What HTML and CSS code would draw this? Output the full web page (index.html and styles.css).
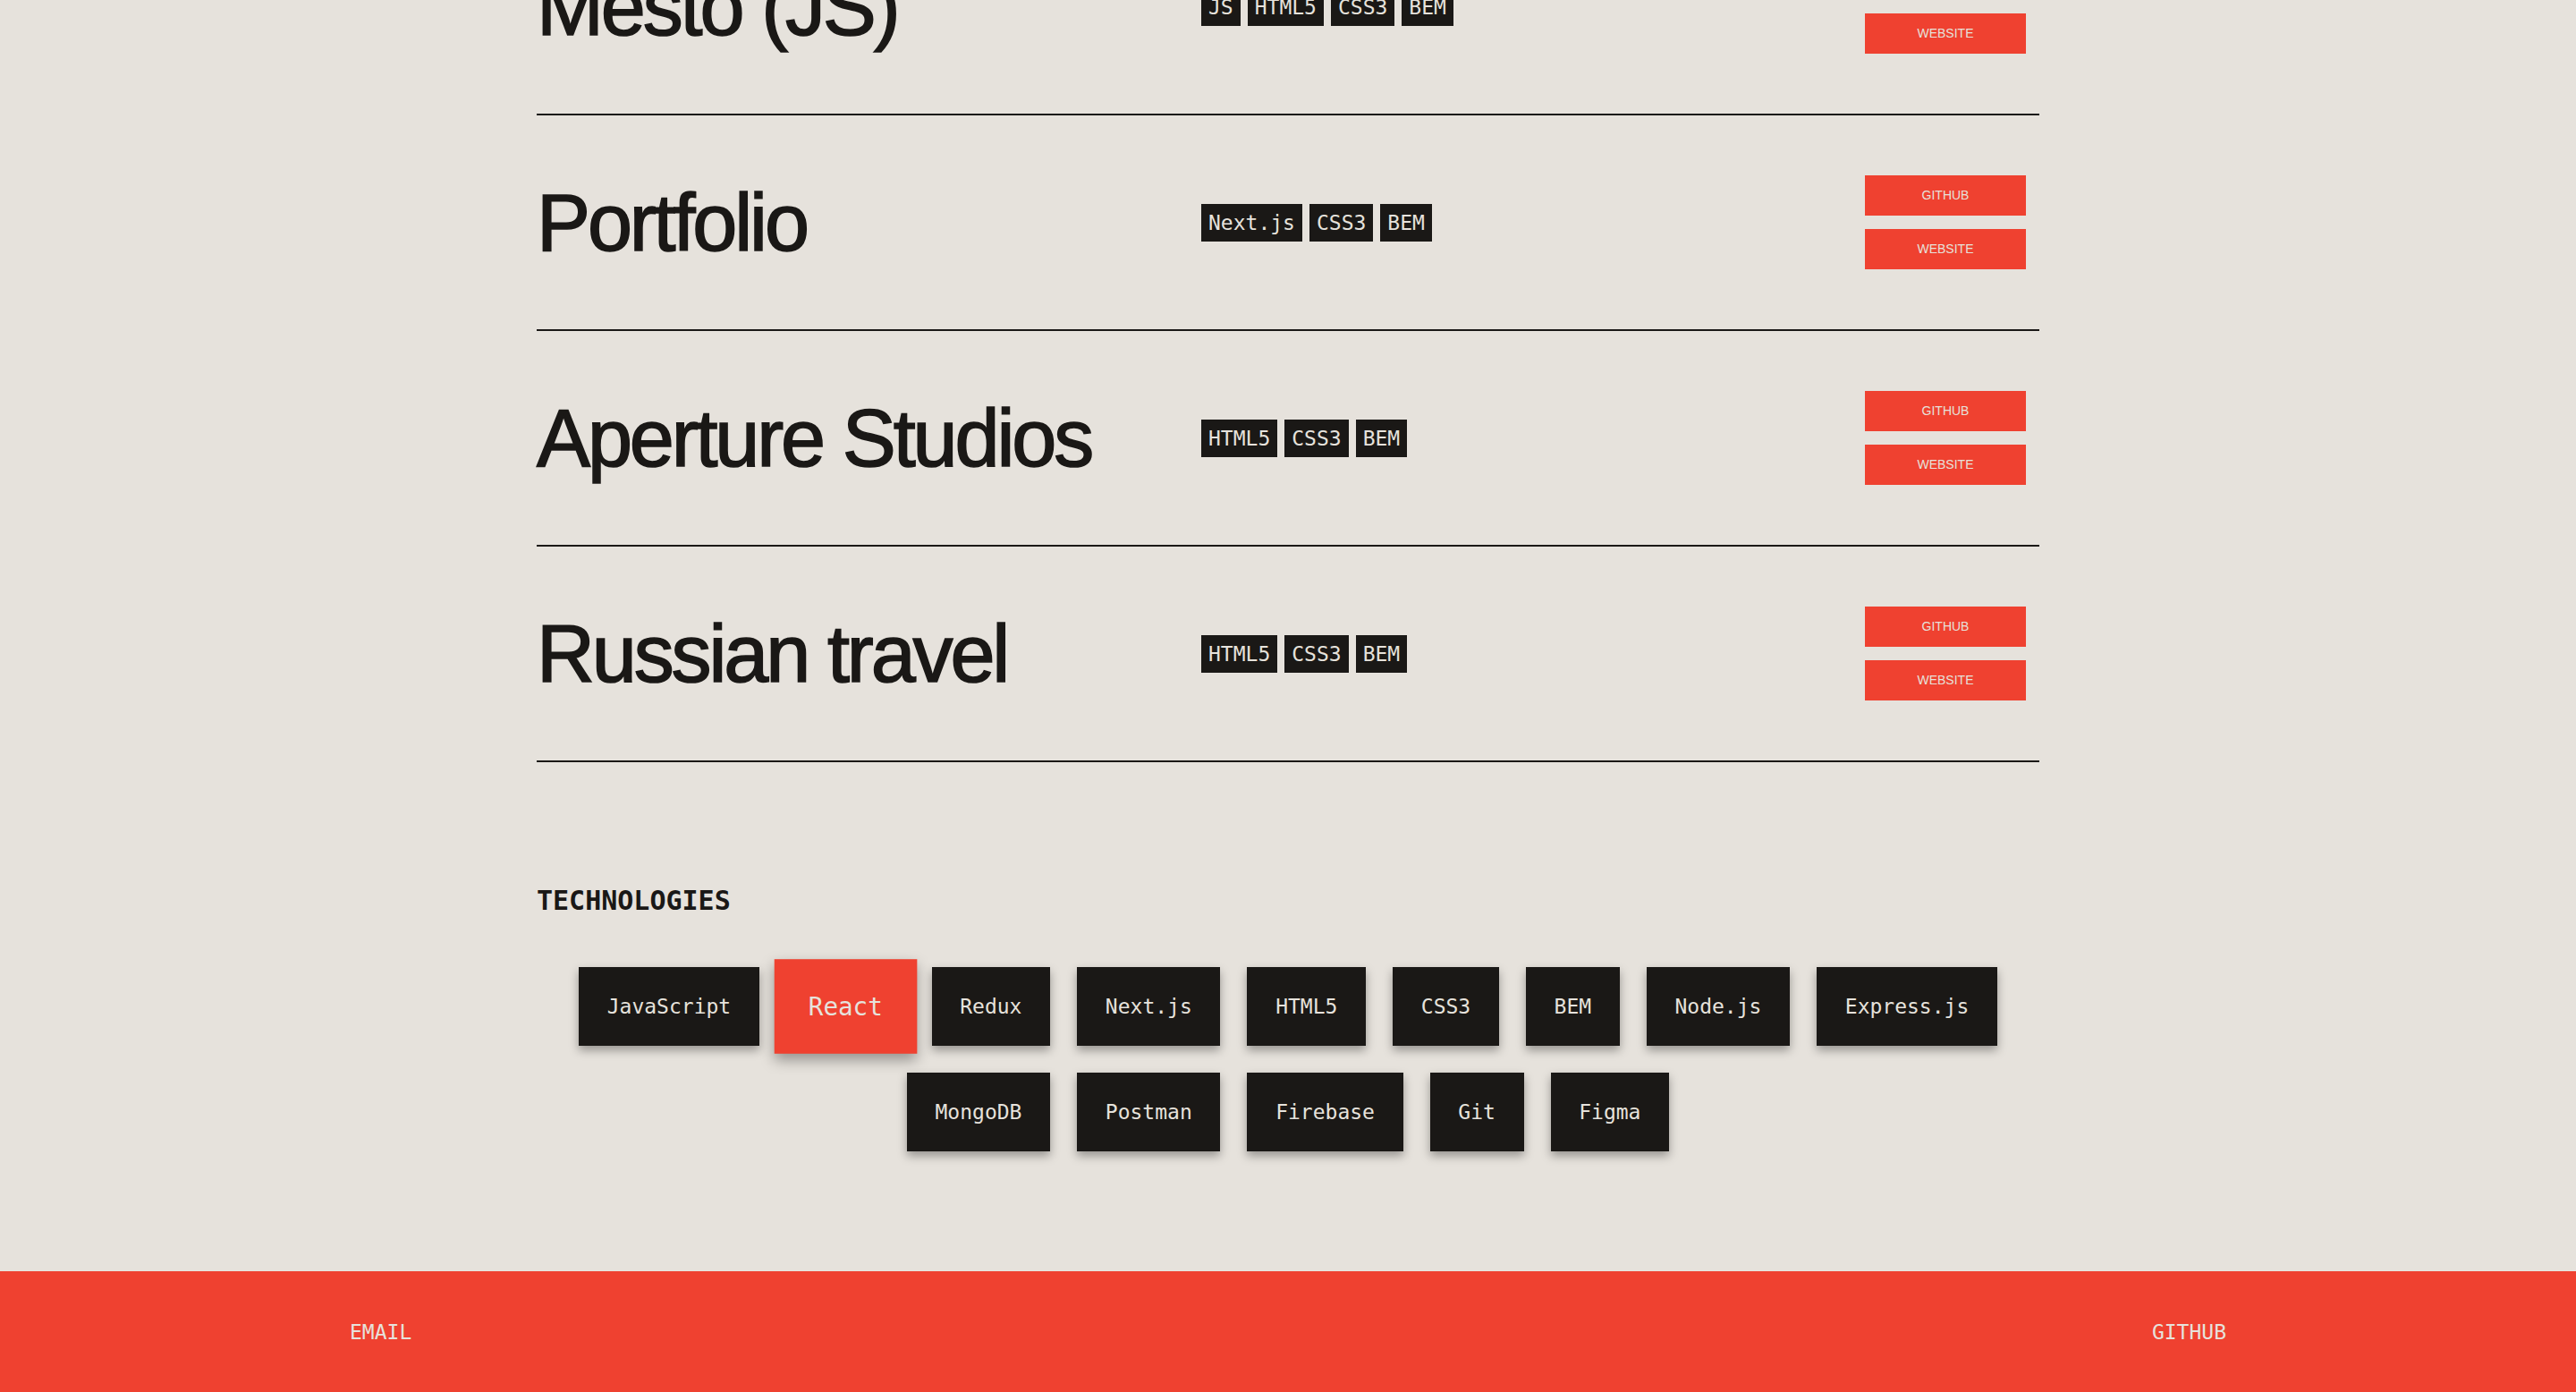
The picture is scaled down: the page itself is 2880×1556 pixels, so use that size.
FILE: index.html
```html
<!DOCTYPE html>
<html lang="en">
<head>
<meta charset="utf-8">
<title>Projects</title>
<link rel="stylesheet" href="styles.css">
</head>
<body>
<main class="page">
  <section class="projects">
    <ul class="project-list">
      <li class="project">
        <h3 class="project__title">Mesto (JS)</h3>
        <ul class="project__tags">
          <li class="tag">JS</li><li class="tag">HTML5</li><li class="tag">CSS3</li><li class="tag">BEM</li>
        </ul>
        <div class="project__links">
          <a class="btn" href="#">GitHub</a>
          <a class="btn" href="#">Website</a>
        </div>
      </li>
      <li class="project">
        <h3 class="project__title">Portfolio</h3>
        <ul class="project__tags">
          <li class="tag">Next.js</li><li class="tag">CSS3</li><li class="tag">BEM</li>
        </ul>
        <div class="project__links">
          <a class="btn" href="#">GitHub</a>
          <a class="btn" href="#">Website</a>
        </div>
      </li>
      <li class="project">
        <h3 class="project__title">Aperture Studios</h3>
        <ul class="project__tags">
          <li class="tag">HTML5</li><li class="tag">CSS3</li><li class="tag">BEM</li>
        </ul>
        <div class="project__links">
          <a class="btn" href="#">GitHub</a>
          <a class="btn" href="#">Website</a>
        </div>
      </li>
      <li class="project">
        <h3 class="project__title">Russian travel</h3>
        <ul class="project__tags">
          <li class="tag">HTML5</li><li class="tag">CSS3</li><li class="tag">BEM</li>
        </ul>
        <div class="project__links">
          <a class="btn" href="#">GitHub</a>
          <a class="btn" href="#">Website</a>
        </div>
      </li>
    </ul>
  </section>

  <section class="tech">
    <h2 class="tech__title">TECHNOLOGIES</h2>
    <ul class="tech__list">
      <li class="chip">JavaScript</li>
      <li class="chip chip--active">React</li>
      <li class="chip">Redux</li>
      <li class="chip">Next.js</li>
      <li class="chip">HTML5</li>
      <li class="chip">CSS3</li>
      <li class="chip">BEM</li>
      <li class="chip">Node.js</li>
      <li class="chip">Express.js</li>
      <li class="chip">MongoDB</li>
      <li class="chip">Postman</li>
      <li class="chip">Firebase</li>
      <li class="chip">Git</li>
      <li class="chip">Figma</li>
    </ul>
  </section>
</main>

<footer class="footer">
  <div class="footer__inner">
    <a class="footer__link" href="#">EMAIL</a>
    <a class="footer__link" href="#">GITHUB</a>
  </div>
</footer>
</body>
</html>
```

FILE: styles.css
```css
* {
  box-sizing: border-box;
}

html, body {
  margin: 0;
  padding: 0;
}

body {
  background: #e6e2dc;
  color: #1a1816;
  font-family: "Liberation Sans", Arial, sans-serif;
  overflow: hidden;
}

.page {
  width: 1680px;
  margin: 0 auto;
}

/* ---------- projects ---------- */
.projects {
  margin-top: -112px;
}

.project-list {
  list-style: none;
  margin: 0;
  padding: 0;
}

.project {
  display: grid;
  grid-template-columns: 743px 1fr 180px;
  align-items: center;
  padding: 67px 15px 67px 0;
  border-bottom: 2px solid #1a1816;
}

.project__title {
  margin: 0;
  font-family: "Liberation Sans", Arial, sans-serif;
  font-weight: 400;
  font-size: 90px;
  line-height: 1;
  letter-spacing: -0.035em;
  -webkit-text-stroke: 1.6px #1a1816;
  white-space: nowrap;
}

.project__tags {
  display: flex;
  gap: 8px;
  list-style: none;
  margin: 0;
  padding: 0;
}

.tag {
  background: #1a1816;
  color: #e6e2dc;
  font-family: "DejaVu Sans Mono", monospace;
  font-size: 23px;
  line-height: 42px;
  padding: 0 8px;
}

.project__links {
  display: flex;
  flex-direction: column;
  gap: 15px;
}

.btn {
  display: block;
  height: 45px;
  line-height: 45px;
  background: #ef4130;
  color: #e6e2dc;
  text-align: center;
  text-decoration: none;
  text-transform: uppercase;
  font-family: "Liberation Sans", Arial, sans-serif;
  font-size: 14px;
}

/* ---------- technologies ---------- */
.tech {
  padding: 140px 0 134px;
}

.tech__title {
  margin: 0 0 60px;
  font-family: "DejaVu Sans Mono", monospace;
  font-weight: 700;
  font-size: 30px;
  line-height: 29px;
}

.tech__list {
  display: flex;
  flex-wrap: wrap;
  justify-content: center;
  gap: 30px;
  list-style: none;
  margin: 0;
  padding: 0;
}

.chip {
  background: #1a1816;
  color: #e6e2dc;
  font-family: "DejaVu Sans Mono", monospace;
  font-size: 23px;
  line-height: 24px;
  padding: 32px 31.7px;
  box-shadow: 0 5px 10px rgba(0, 0, 0, 0.35);
}

.chip--active {
  background: #ef4130;
  transform: scale(1.2);
  box-shadow: 0 6px 12px rgba(0, 0, 0, 0.35);
}

/* ---------- footer ---------- */
.footer {
  background: #ef4130;
  height: 135px;
  display: flex;
  align-items: center;
}

.footer__inner {
  width: 2098px;
  margin: 0 auto;
  display: flex;
  justify-content: space-between;
}

.footer__link {
  color: #e6e2dc;
  text-decoration: none;
  font-family: "DejaVu Sans Mono", monospace;
  font-size: 23px;
  line-height: 24px;
}
```
